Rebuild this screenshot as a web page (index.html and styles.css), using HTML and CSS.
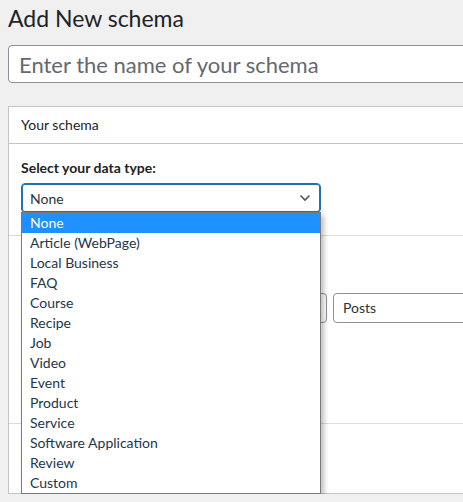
FILE: index.html
```html
<!DOCTYPE html>
<html lang="en">
<head>
  <meta charset="UTF-8" />
  <meta name="viewport" content="width=device-width, initial-scale=1.0"/>
  <title>Add New schema</title>
  <link rel="stylesheet" href="styles.css">
</head>
<body>
  <div class="wrap">
    <h1>Add New schema</h1>
    <input type="text" class="title-input" placeholder="Enter the name of your schema" />

    <!-- Your schema -->
    <div class="postbox">
      <div class="postbox-header">Your schema</div>

      <div class="section">
        <div class="field-label">Select your data type:</div>
        <div class="select-wrap">
          <div class="fake-select">
            <span>None</span>
            <svg class="chevron" width="12" height="8" viewBox="0 0 12 8">
              <polyline points="1.5,1.5 6,6 10.5,1.5" fill="none" stroke="#50575e" stroke-width="1.6"/>
            </svg>
          </div>

          <ul class="dropdown">
            <li class="active">None</li>
            <li>Article (WebPage)</li>
            <li>Local Business</li>
            <li>FAQ</li>
            <li>Course</li>
            <li>Recipe</li>
            <li>Job</li>
            <li>Video</li>
            <li>Event</li>
            <li>Product</li>
            <li>Service</li>
            <li>Software Application</li>
            <li>Review</li>
            <li>Custom</li>
          </ul>
        </div>
      </div>

      <!-- rules (mostly covered by the open list) -->
      <div class="section section-location">
        <div class="rule-row">
          <div class="rule-select rule-first"></div>
          <div class="rule-select">Posts</div>
        </div>
      </div>

      <div class="postbox-footer"></div>
    </div>
  </div>
</body>
</html>
```

FILE: styles.css
```css
body {
  margin: 0;
  background: #f0f0f1;
  font-family: Lato, "Noto Sans", sans-serif;
  color: #1d2327;
  overflow: hidden;
}
.wrap {
  padding-left: 8px;
  width: 560px;
}
h1 {
  margin: 0;
  padding-top: 4px;
  font-size: 23px;
  font-weight: 400;
  line-height: 29px;
}
.title-input {
  display: block;
  box-sizing: border-box;
  width: 100%;
  height: 38px;
  margin-top: 12px;
  padding: 0 10px;
  border: 1px solid #8c8f94;
  border-radius: 4px;
  background: #fff;
  font-family: inherit;
  font-size: 22px;
  color: #2c3338;
}
.title-input::placeholder {
  color: #646970;
}
.postbox {
  margin-top: 23px;
  background: #fff;
  border: 1px solid #c3c4c7;
}
.postbox-header {
  height: 36px;
  line-height: 36px;
  padding-left: 12px;
  font-size: 14px;
  border-bottom: 1px solid #c3c4c7;
}
.section {
  padding: 14px 12px 22px;
  border-bottom: 1px solid #dcdcde;
}
.field-label {
  font-size: 14px;
  font-weight: 700;
  line-height: 20px;
}
.select-wrap {
  position: relative;
  width: 300px;
  margin-top: 5px;
}
.fake-select {
  box-sizing: border-box;
  height: 30px;
  display: flex;
  align-items: center;
  justify-content: space-between;
  padding: 0 9px 0 8px;
  border: 1px solid #2271b1;
  box-shadow: 0 0 0 1px #2271b1 inset;
  border-radius: 4px;
  font-size: 14px;
  color: #2c3338;
}
.dropdown {
  position: absolute;
  top: 29px;
  left: 0;
  z-index: 5;
  box-sizing: border-box;
  width: 300px;
  margin: 0;
  padding: 0;
  list-style: none;
  background: #fff;
  border: 1px solid #7a7a7a;
  box-shadow: 3px 3px 5px rgba(0,0,0,0.25);
}
.dropdown li {
  height: 20px;
  line-height: 20px;
  padding-left: 8px;
  font-size: 14px;
  color: #23364a;
}
.dropdown li.active {
  background: #1e90ff;
  color: #fff;
}
.section-location {
  padding: 57px 12px 100px;
}
.rule-row {
  display: flex;
  gap: 6px;
}
.rule-select {
  flex: 1;
  box-sizing: border-box;
  height: 30px;
  line-height: 28px;
  padding-left: 9px;
  border: 1px solid #8c8f94;
  border-radius: 4px;
  font-size: 14px;
  color: #2c3338;
}
.rule-first {
  flex: 0 0 306px;
}
.postbox-footer {
  height: 69px;
}
```
